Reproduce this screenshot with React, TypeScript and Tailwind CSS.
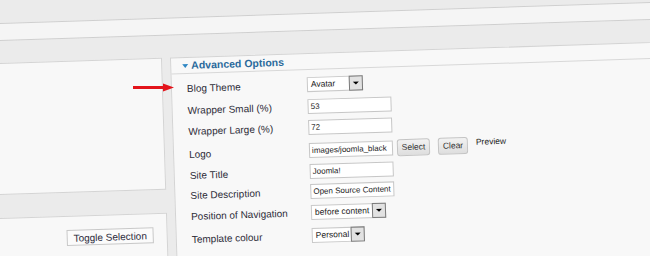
function Input({ value }: { value: string }) {
  return (
    <div className="h-[15px] w-[84px] overflow-hidden whitespace-nowrap border border-[#c6c6c6] bg-white pl-[2px] text-[8px] leading-[13px] text-[#222]">
      {value}
    </div>
  );
}

function Select({ value, width }: { value: string; width: string }) {
  return (
    <div className={`flex h-[15px] items-stretch border border-[#c9c9c9] bg-white ${width}`}>
      <span className="flex-1 overflow-hidden whitespace-nowrap pl-[3px] text-[8.5px] leading-[13px] text-[#222]">{value}</span>
      <span className="-my-px -mr-px flex w-[14px] items-center justify-center border border-[#7a7a7a] bg-[#e2e2e2]">
        <span className="h-0 w-0 border-x-[3px] border-t-[3px] border-x-transparent border-t-black" />
      </span>
    </div>
  );
}

function Row({ label, h, children }: { label: string; h: string; children: React.ReactNode }) {
  return (
    <div className={`flex items-center ${h}`}>
      <div className="w-[120px] text-[10px] text-[#2e2d38]">{label}</div>
      <div className="flex items-center">{children}</div>
    </div>
  );
}

function Button({ label, w }: { label: string; w: string }) {
  return (
    <div className={`flex h-[17px] items-center justify-center rounded-[3px] border border-[#c4c4c4] bg-gradient-to-b from-[#f2f2f2] to-[#dedede] text-[8.5px] text-[#333] ${w}`}>
      {label}
    </div>
  );
}

export default function App() {
  return (
    <div className="relative h-[256px] w-[650px] overflow-hidden bg-[#ebebeb] font-['Liberation_Sans',Arial,sans-serif]">
      <div className="-ml-[20px] w-[720px] origin-[20px_0px] -rotate-[1.85deg]">
        <div className="h-[23px]" />
        <div className="h-[18px] border-y border-[#cfcfcf] bg-[#f5f5f5]" />
        <div className="h-[22px]" />
        <div className="flex gap-[8px]">
          <div className="flex w-[180px] flex-col gap-[23px]">
            <div className="h-[132px] border border-[#d4d4d4] bg-[#f8f8f8]" />
            <div className="flex h-[80px] justify-end border border-[#d4d4d4] bg-[#f8f8f8] pr-[13px] pt-[13px]">
              <div className="flex h-[16px] w-[87px] items-center justify-center border border-[#c8c8c8] bg-[#fbfbfb] text-[10px] text-[#2d2c3c]">
                Toggle Selection
              </div>
            </div>
          </div>
          <div className="h-[240px] flex-1 border border-[#d4d4d4] bg-[#f8f8f8]">
            <div className="flex h-[16px] items-center gap-[3px] border-b border-[#d8d8d8] pl-[11px]">
              <span className="h-0 w-0 border-x-[3.5px] border-t-[4px] border-x-transparent border-t-[#2f87c4]" />
              <span className="text-[10.5px] font-bold text-[#2a6a9c]">Advanced Options</span>
            </div>
            <div className="pl-[15px] pt-[3px]">
              <Row label="Blog Theme" h="h-[22px]">
                <Select value="Avatar" width="w-[56px]" />
              </Row>
              <Row label="Wrapper Small (%)" h="h-[22px]">
                <Input value="53" />
              </Row>
              <Row label="Wrapper Large (%)" h="h-[21px]">
                <Input value="72" />
              </Row>
              <Row label="Logo" h="h-[24px]">
                <Input value="images/joomla_black" />
                <div className="ml-[4px]">
                  <Button label="Select" w="w-[33px]" />
                </div>
                <div className="ml-[8px]">
                  <Button label="Clear" w="w-[30px]" />
                </div>
                <span className="-mt-[5px] ml-[8px] text-[8.5px] text-[#222]">Preview</span>
              </Row>
              <Row label="Site Title" h="h-[18px]">
                <Input value="Joomla!" />
              </Row>
              <Row label="Site Description" h="h-[22px]">
                <Input value="Open Source Content" />
              </Row>
              <Row label="Position of Navigation" h="h-[20px]">
                <Select value="before content" width="w-[75px]" />
              </Row>
              <Row label="Template colour" h="h-[26px]">
                <Select value="Personal" width="w-[53px]" />
              </Row>
            </div>
          </div>
        </div>
      </div>
      <svg className="absolute left-[132px] top-[83px] h-[9px] w-[43px]" viewBox="0 0 43 9">
        <rect x="1" y="3" width="32" height="3" fill="#e3141b" />
        <polygon points="31,0.5 42,4.5 31,8.5" fill="#e3141b" />
      </svg>
    </div>
  );
}
